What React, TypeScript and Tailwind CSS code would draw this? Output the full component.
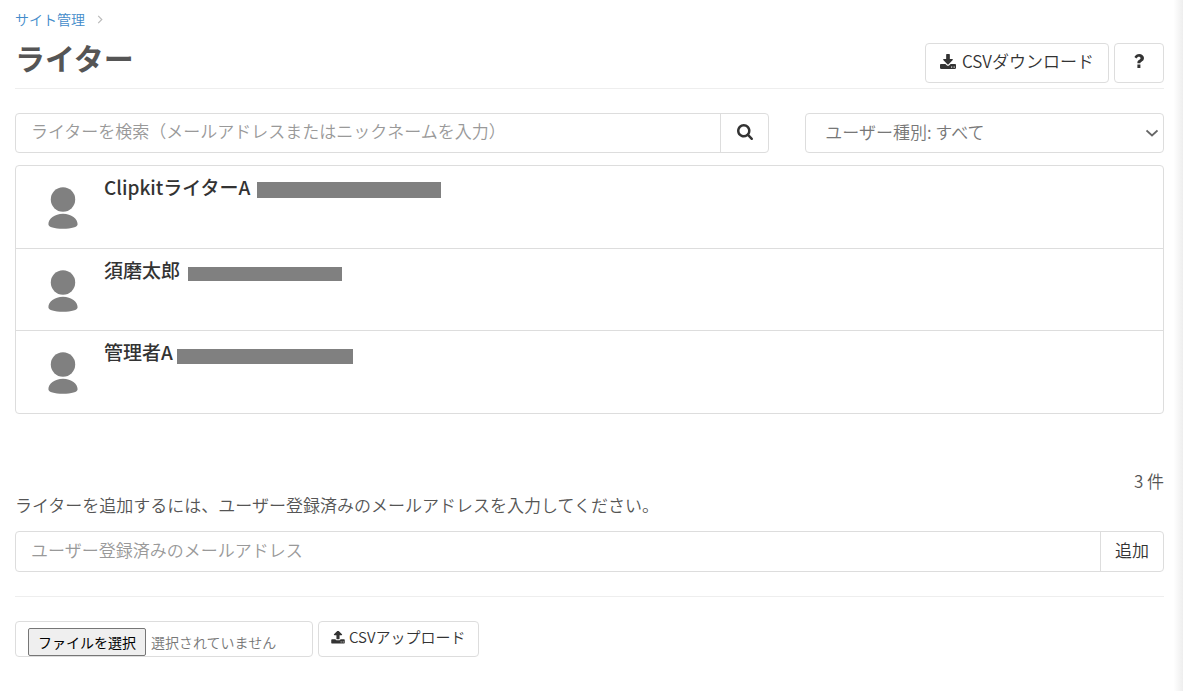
import { useState } from "react";

const writers = [
  { name: "ClipkitライターA", mask: "ml-[7px] mt-1 h-4 w-[184px]" },
  { name: "須磨太郎", mask: "ml-2 mt-[6px] h-[14px] w-[154px]" },
  { name: "管理者A", mask: "ml-1 mt-[6px] h-[15px] w-[176px]" },
];

const DOWNLOAD =
  "M1280 1344q0-26-19-45t-45-19-45 19-19 45 19 45 45 19 45-19 19-45zm256 0q0-26-19-45t-45-19-45 19-19 45 19 45 45 19 45-19 19-45zm128-224v320q0 40-28 68t-68 28h-1472q-40 0-68-28t-28-68v-320q0-40 28-68t68-28h465l135 136q58 56 136 56t136-56l136-136h464q40 0 68 28t28 68zm-325-569q17 41-14 70l-448 448q-18 19-45 19t-45-19l-448-448q-31-29-14-70 17-39 59-39h256v-448q0-26 19-45t45-19h256q26 0 45 19t19 45v448h256q42 0 59 39z";

const UPLOAD =
  "M1280 1344q0-26-19-45t-45-19-45 19-19 45 19 45 45 19 45-19 19-45zm256 0q0-26-19-45t-45-19-45 19-19 45 19 45 45 19 45-19 19-45zm128-224v320q0 40-28 68t-68 28h-1472q-40 0-68-28t-28-68v-320q0-40 28-68t68-28h427q21 56 70.500 92t110.500 36h256q61 0 110.500-36t70.500-92h427q40 0 68 28t28 68zm-325-648q-17 40-59 40h-256v448q0 26-19 45t-45 19h-256q-26 0-45-19t-19-45v-448h-256q-42 0-59-40-17-39 14-69l448-448q18-19 45-19t45 19l448 448q31 30 14 69z";

function Avatar() {
  return (
    <svg viewBox="0 0 30 42" className="h-[42px] w-[30px] fill-[#808080]" aria-hidden="true">
      <circle cx="15" cy="12.500" r="12.200" />
      <path d="M15 26.800c8.500 0 14.600 5.200 14.600 10.400 0 2.800-6 4.500-14.600 4.500S.4 40 .4 37.200c0-5.200 6.100-10.400 14.600-10.400z" />
    </svg>
  );
}

export default function App() {
  const [query, setQuery] = useState("");
  const [email, setEmail] = useState("");

  return (
    <div className="flex min-h-screen bg-white font-['Noto_Sans_CJK_JP',sans-serif] font-[350] text-[#555]">
      <main className="min-w-0 flex-1 py-2 pl-[15px]">
        <nav aria-label="パンくず" className="flex h-[22px] items-center gap-3 text-sm">
          <a href="#site" className="text-[#428bca]">サイト管理</a>
          <svg viewBox="0 0 6 10" className="h-[9px] w-[6px] fill-none stroke-[#bbb]" aria-hidden="true">
            <path d="M1 1l4 4-4 4" strokeWidth="1.300" />
          </svg>
        </nav>
        <header className="flex h-[59px] items-start justify-between border-b border-[#eee]">
          <h1 className="pt-[5px] text-[30px] leading-[44px] font-bold">ライター</h1>
          <div className="flex gap-[5px] pt-[13px] text-[#333]">
            <button type="button" className="flex h-10 items-center gap-[6px] rounded border border-[#ddd] px-[14px] pb-1 text-[17px]">
              <svg viewBox="0 0 1664 1536" className="h-[15px] w-4 fill-current" aria-hidden="true"><path d={DOWNLOAD} /></svg>
              CSVダウンロード
            </button>
            <button type="button" aria-label="ヘルプ" className="flex h-10 w-[50px] items-center justify-center rounded border border-[#ddd] pb-1">
              <svg viewBox="0 0 10 14" className="h-[14px] w-[10px] fill-current" aria-hidden="true">
                <path d="M3.400 10.500h3V14h-3zM6.300 9.300H3.400V8.500c0-1.500 1-2.200 1.900-2.800.8-.5 1.200-.8 1.200-1.500 0-.8-.7-1.400-1.600-1.400-1 0-1.600.5-2.500 1.600L.4 2.900C1.600 1 3 0 5.200 0 7.800 0 10 1.700 10 4.100c0 2.100-1.300 3-2.400 3.700-.8.500-1.300.8-1.300 1.500z" />
              </svg>
            </button>
          </div>
        </header>

        <div className="mt-6 flex gap-9">
          <form className="flex h-10 min-w-0 flex-[753] rounded border border-[#ddd]" onSubmit={(e) => e.preventDefault()}>
            <input
              type="search"
              aria-label="ライターを検索"
              value={query}
              onChange={(e) => setQuery(e.target.value)}
              placeholder="ライターを検索（メールアドレスまたはニックネームを入力）"
              className="min-w-0 flex-1 px-[15px] pb-1 text-[17px] outline-none placeholder:text-[#999]"
            />
            <button type="submit" aria-label="検索" className="flex w-12 items-center justify-center border-l border-[#ddd] pb-[2px] text-[#333]">
              <svg viewBox="0 0 1664 1664" className="size-4 fill-current" aria-hidden="true">
                <path d="M1152 704q0-185-131.500-316.500t-316.500-131.500-316.500 131.500-131.500 316.500 131.500 316.500 316.500 131.500 316.500-131.500 131.500-316.500zm512 832q0 52-38 90t-90 38q-54 0-90-38l-343-342q-179 124-399 124-143 0-273.500-55.500t-225-150-150-225-55.500-273.500 55.500-273.500 150-225 225-150 273.500-55.500 273.500 55.500 225 150 150 225 55.500 273.500q0 220-124 399l343 343q37 37 37 90z" />
              </svg>
            </button>
          </form>
          <div className="grid min-w-0 flex-[359]">
            <select aria-label="ユーザー種別" className="col-start-1 row-start-1 h-10 appearance-none rounded border border-[#ddd] bg-white px-[19px] pb-[2px] text-[17px] text-[#777]">
              <option>ユーザー種別: すべて</option>
            </select>
            <svg viewBox="0 0 12 8" className="pointer-events-none col-start-1 row-start-1 mr-[6px] h-2 w-3 self-center justify-self-end fill-none stroke-[#666]" aria-hidden="true">
              <path d="M.5 1.500l5.500 5 5.500-5" strokeWidth="1.800" />
            </svg>
          </div>
        </div>

        <ul className="mt-3 divide-y divide-[#ddd] rounded border border-[#ddd]">
          {writers.map((w) => (
            <li key={w.name} className="flex h-[82px] gap-[26px] pl-8 first:h-[83px]">
              <div className="pt-[21px]"><Avatar /></div>
              <div className="flex h-11 items-center">
                <a href="#writer" className="pb-[2px] text-[19px] leading-7 font-medium text-[#333]">{w.name}</a>
                <span className={`${w.mask} bg-[#808080]`} />
              </div>
            </li>
          ))}
        </ul>

        <p className="mt-[55px] text-right text-[17px] leading-6">3 件</p>
        <form onSubmit={(e) => e.preventDefault()}>
          <label htmlFor="email" className="block text-[17px] leading-6">
            ライターを追加するには、ユーザー登録済みのメールアドレスを入力してください。
          </label>
          <div className="mt-[14px] flex h-[41px] rounded border border-[#ddd]">
            <input
              id="email"
              type="email"
              value={email}
              onChange={(e) => setEmail(e.target.value)}
              placeholder="ユーザー登録済みのメールアドレス"
              className="min-w-0 flex-1 px-[15px] pb-1 text-[17px] outline-none placeholder:text-[#999]"
            />
            <button type="submit" className="border-l border-[#ddd] px-[14px] pb-1 text-[17px] text-[#333]">追加</button>
          </div>
        </form>

        <hr className="my-6 border-[#eee]" />
        <form className="flex gap-[5px] text-sm" onSubmit={(e) => e.preventDefault()}>
          <label className="flex h-9 w-[298px] items-end rounded border border-[#ddd] pl-3 text-[#777]">
            <input type="file" accept=".csv" className="sr-only" />
            <span className="mr-[5px] flex h-7 items-center rounded-xs border border-[#767676] bg-[#efefef] px-[9px] pb-px font-normal text-black">ファイルを選択</span>
            <span className="flex h-7 items-center pb-px">選択されていません</span>
          </label>
          <button type="submit" className="flex h-9 items-center gap-1 rounded border border-[#ddd] px-3 pb-1 text-[15px] text-[#333]">
            <svg viewBox="0 0 1664 1600" className="h-[13px] w-[14px] fill-current" aria-hidden="true"><path d={UPLOAD} /></svg>
            CSVアップロード
          </button>
        </form>
      </main>
      <div className="w-[19px] shrink-0 bg-linear-to-r from-white from-50% to-[#eee]" />
    </div>
  );
}
